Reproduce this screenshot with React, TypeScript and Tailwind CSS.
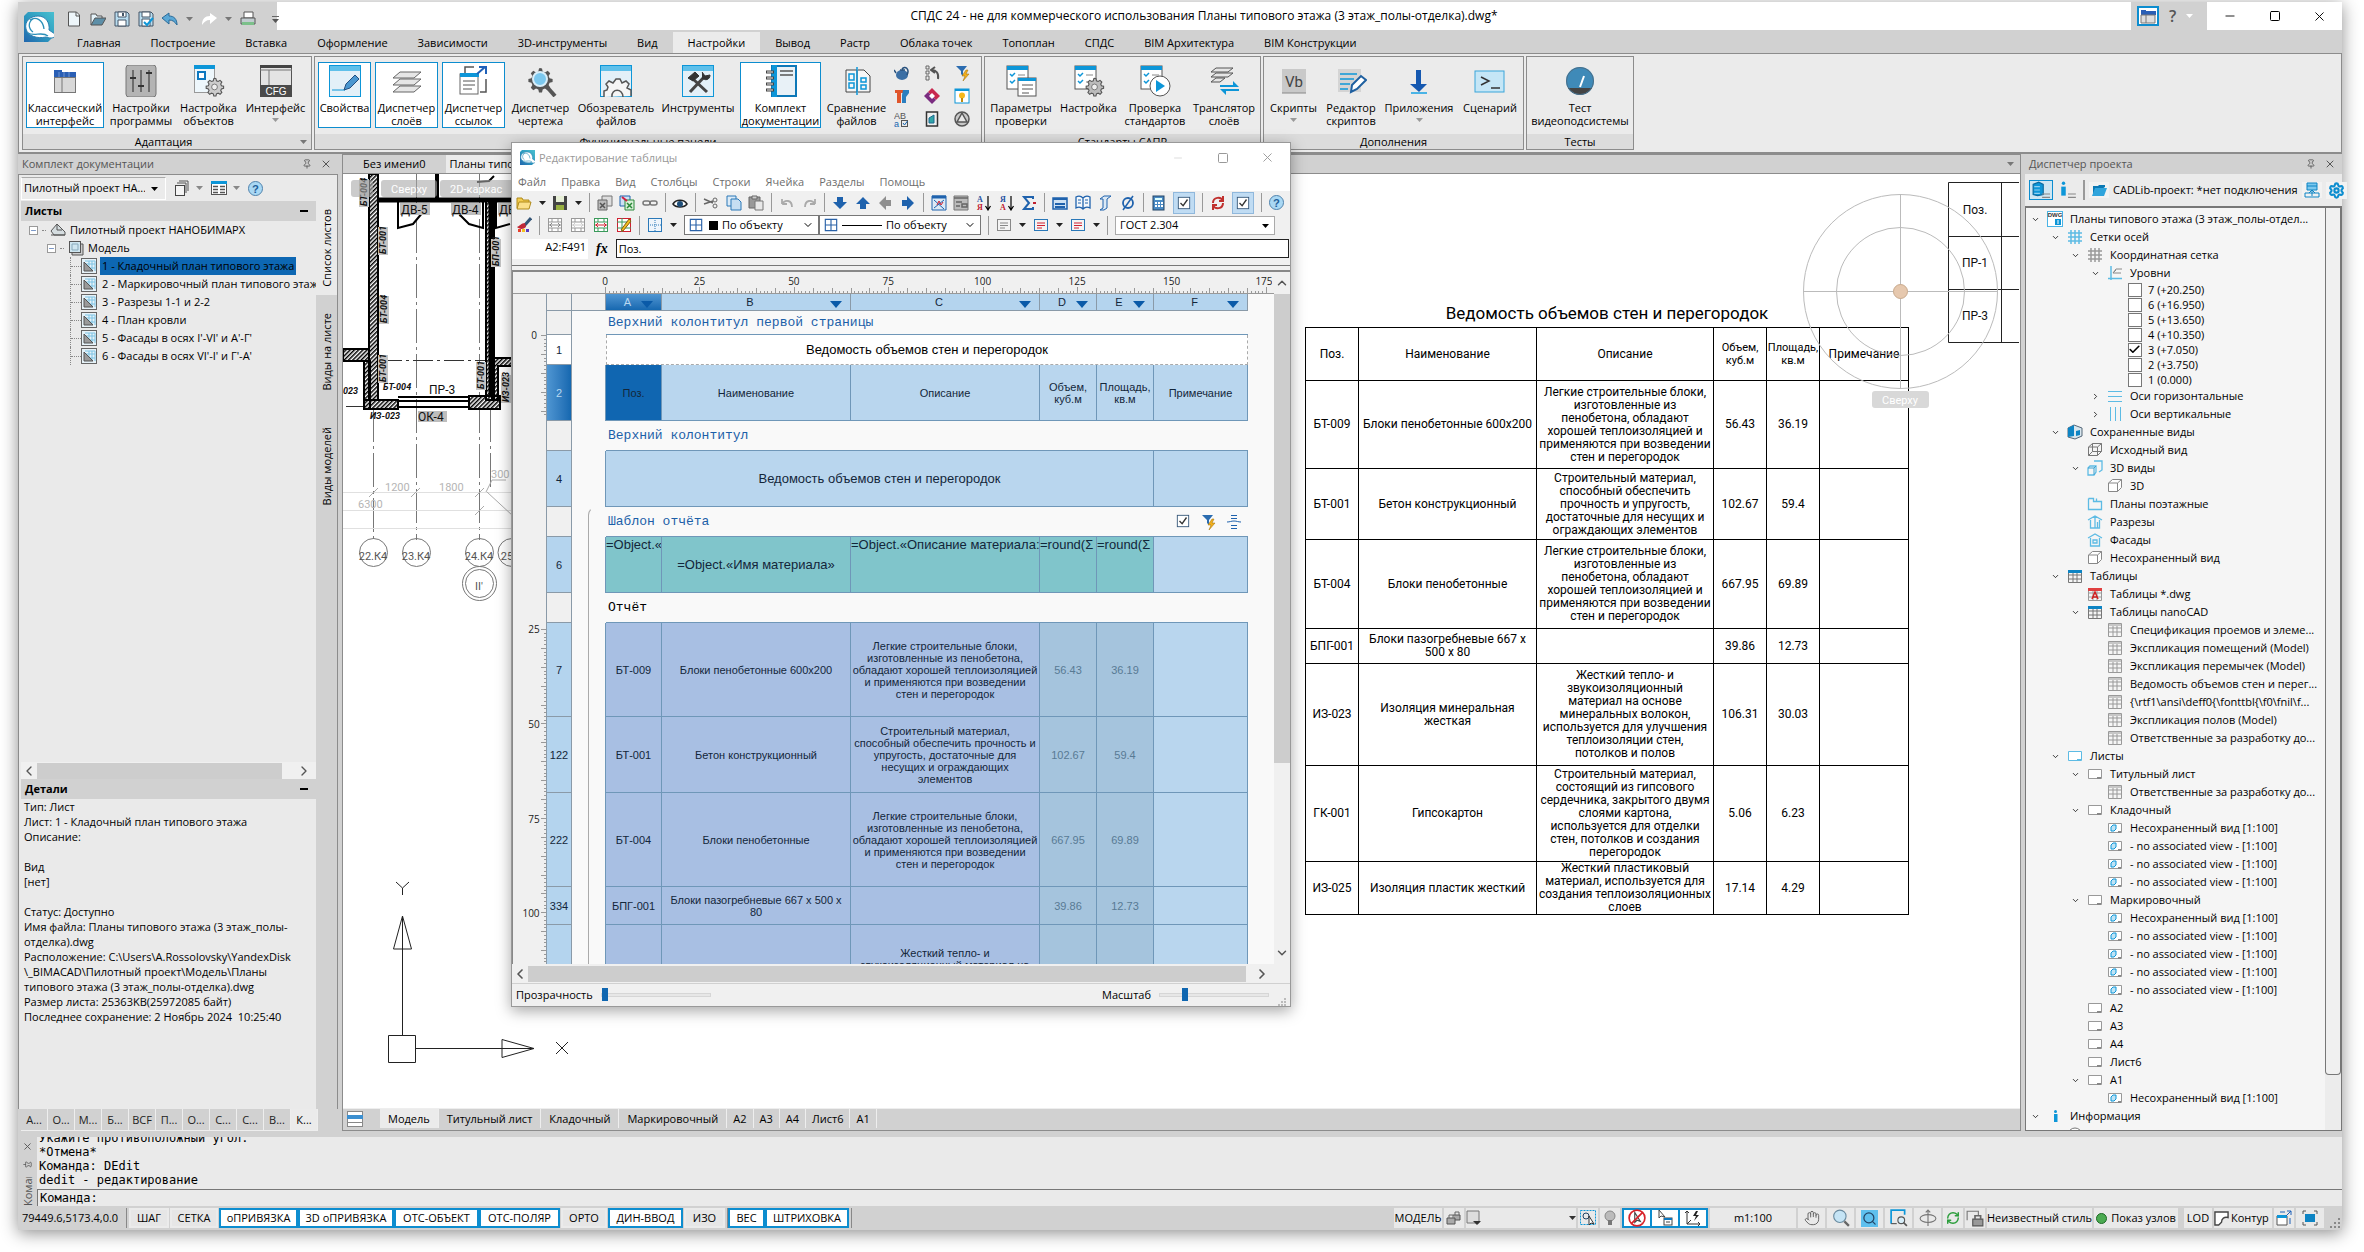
import React from 'react';
import type { ReactNode } from 'react';
import { Check, ChevronDown, ChevronLeft, ChevronRight, ChevronUp, Hand, Minus, Pin, RefreshCw, Search, Settings, Square, X } from 'lucide-react';

/* ---------- Icons ---------- */

interface IconProps {
  size?: number;
  box?: string;
  children: ReactNode;
}

const Icon: React.FC<IconProps> = ({ size = 16, box = '0 0 16 16', children }) => (
  <svg width={size} height={size} viewBox={box} fill="none" className="shrink-0" aria-hidden="true">
    {children}
  </svg>
);

const Big: React.FC<{ children: ReactNode }> = ({ children }) => (
  <Icon size={32} box="0 0 32 32">{children}</Icon>
);

const Caret: React.FC<{ color?: string }> = ({ color = '#555' }) => (
  <svg width="7" height="4" viewBox="0 0 7 4" className="shrink-0" aria-hidden="true">
    <path d="M0 0h7L3.500 4z" fill={color} />
  </svg>
);

const Logo: React.FC<{ size: number }> = ({ size }) => (
  <svg width={size} height={size} viewBox="0 0 30 30" className="shrink-0" aria-hidden="true">
    <defs>
      <linearGradient id={`logo${size}`} x1="1" y1="0" x2="0" y2="1">
        <stop offset="0" stopColor="#49bfd0" />
        <stop offset=".5" stopColor="#2d9bc0" />
        <stop offset="1" stopColor="#2166ad" />
      </linearGradient>
    </defs>
    <path d="M4 0h26v24l-6 6H0V4z" fill={`url(#logo${size})`} />
    <path d="M2 17C0 9 7 4 14 4c8 0 12 7 11 14l6 4c1 4-4 5-9 3C13 27 4 24 2 17z" fill="#fff" stroke="#2b7fb0" strokeWidth="1" />
    <path d="M6 8c6-4 13 0 14 9M9 20c-5-4-5-10 0-13M4 21c6 4 14-2 20 3" stroke="#2b8fb8" strokeWidth="1.300" fill="none" />
  </svg>
);

const gear = 'M16 6l2 .4.7 3 2.300 1 2.700-1.600 2.500 2.500-1.600 2.700 1 2.300 3 .7v3l-3 .7-1 2.300 1.600 2.700-2.500 2.500-2.700-1.600-2.300 1-.7 3h-3l-.7-3-2.300-1-2.700 1.600-2.500-2.500 1.600-2.700-1-2.300-3-.7v-3l3-.7 1-2.300-1.600-2.700 2.500-2.500 2.700 1.600 2.300-1 .7-3z';

const DocLines: React.FC = () => (
  <>
    <rect x="2" y="1" width="21" height="23" fill="#fff" stroke="#555" />
    <rect x="2" y="1" width="21" height="4" fill="#0d96d8" />
    <path d="M5 9l2 2 3-3M5 16l2 2 3-3" stroke="#0d96d8" strokeWidth="1.500" />
    <path d="M13 10h7M13 17h4" stroke="#888" />
  </>
);

const WindowFrame: React.FC = () => (
  <>
    <rect x=".5" y=".5" width="31" height="31" fill="#e3f0f8" stroke="#0d96d8" />
    <rect x="1" y="1" width="30" height="5" fill="#5fc0ea" />
  </>
);

const ribbonIcons: Record<string, ReactNode> = {
  classic: <Big><path d="M5 5h8v2h14v6H5z" fill="#2a5fb5" /><path d="M10 7v6M15 7v6M20 7v6" stroke="#6e95d0" /><rect x="5.500" y="12.500" width="21" height="15" fill="#d8d8d8" stroke="#777" /><path d="M13 12v16" stroke="#777" /></Big>,
  sliders: <Big><rect x="1" y="0" width="30" height="32" rx="3" fill="#b4b4b4" stroke="#777" /><path d="M8 5v22M16 5v22M24 5v22" stroke="#555" strokeWidth="1.500" /><path d="M5 13h6M13 21h6M21 8h6" stroke="#333" strokeWidth="2" /></Big>,
  object: <Big><rect x="1.500" y=".5" width="20" height="27" fill="#eef7fc" stroke="#999" /><path d="M1 0h21v4H1z" fill="#0d96d8" /><rect x="5" y="7" width="7" height="7" fill="#fff" stroke="#0d78c0" strokeWidth="2" /><g transform="translate(10 9) scale(.72)"><path d={gear} fill="#ccc" stroke="#555" strokeWidth="1.500" /><circle cx="16" cy="18" r="4" fill="#eee" stroke="#555" /></g></Big>,
  cfg: <Big><rect x=".5" y=".5" width="31" height="31" fill="#e4e4e4" stroke="#555" /><path d="M0 5h32M9 5v16" stroke="#777" /><path d="M0 0h32v3H0z" fill="#444" /><path d="M0 20h32v12H0z" fill="#4a4a4a" /><text x="16" y="30" textAnchor="middle" fontSize="10" fontFamily="Liberation Sans, sans-serif" fill="#fff">CFG</text></Big>,
  props: <Big><WindowFrame /><path d="M3 25h13" stroke="#0d96d8" /><path d="M15 25l2-6 9-9 4 4-9 9z" fill="#4a97d0" stroke="#234f80" /></Big>,
  layers: <Big><path d="M9 7h21l-7 6H2zM9 14h21l-7 6H2zM9 21h21l-7 6H2z" fill="#e6e6e6" stroke="#666" /></Big>,
  links: <Big><path d="M7 9V2h9M22 27h6V14" stroke="#555" strokeWidth="1.500" /><rect x="2" y="9" width="18" height="20" fill="#fff" stroke="#666" /><path d="M2 8h19v4H2z" fill="#0d96d8" /><path d="M5 16h12M5 20h12M5 24h9" stroke="#555" /><path d="M19 9l8-7M21 2h7v7" stroke="#1f60b8" strokeWidth="2" /></Big>,
  manager: <Big><path d="M22 22l8 9" stroke="#555" strokeWidth="4" /><g transform="translate(-1 -3)"><path d={gear} fill="#555" /></g><circle cx="15" cy="14" r="7" fill="#7cc8ee" stroke="#d8eef9" strokeWidth="2" /></Big>,
  files: <Big><WindowFrame /><path d="M4 32v-6l3-1 1-3-2-3 3-3 4 2 3-4h4l2 4 4-2 3 3-2 4 4 2v6" fill="#f5f5f5" stroke="#555" strokeWidth="1.500" /><path d="M12 32c-1-9 11-9 11 0" stroke="#555" strokeWidth="1.500" /></Big>,
  tools: <Big><WindowFrame /><path d="M8 27L23 11M11 14l14 13" stroke="#444" strokeWidth="3" /><path d="M6 13l7-6 4 4-6 5zM20 7l3 4 5-1c0 5-5 6-8 3" fill="#333" stroke="#333" /></Big>,
  book: <Big><rect x="7" y="1" width="24" height="30" fill="#e8f1f7" stroke="#0d78b8" strokeWidth="2" /><path d="M7 0h5v32H7z" fill="#0d96d8" /><path d="M15 6h13M15 10h13" stroke="#555" strokeWidth="1.500" /><path d="M1 7h8M1 13h8M1 19h8M1 25h8" stroke="#444" strokeWidth="3" /><path d="M2 7h6M2 13h6M2 19h6M2 25h6" stroke="#eee" /></Big>,
  compare: <Big><path d="M5 5h11v22H5zM17 5h6l6 6v16H17" fill="#f6f6f6" stroke="#444" /><path d="M16 2v28" stroke="#0d96d8" strokeWidth="1.500" /><path d="M8 9h5v6H8zM8 18h5v5H8zM20 13h5v4h-5zM20 20h5v4h-5z" stroke="#0d96d8" strokeWidth="1.500" /></Big>,
  params: <Big><DocLines /><rect x="13" y="13" width="18" height="18" fill="#fff" stroke="#555" /><path d="M13 13h18v3H13z" fill="#0d96d8" /><path d="M17 20h11M17 24h11M17 28h7" stroke="#555" /></Big>,
  setup: <Big><DocLines /><g transform="translate(10 9) scale(.72)"><path d={gear} fill="#bbb" stroke="#555" strokeWidth="1.500" /><circle cx="16" cy="18" r="4" fill="#eee" stroke="#555" /></g></Big>,
  check: <Big><DocLines /><circle cx="21" cy="21" r="10" fill="#fff" stroke="#555" /><path d="M17 15l9 6-9 6z" fill="#0d96d8" /></Big>,
  translate: <Big><path d="M8 3h17l-5 4H3zM8 8h17l-5 4H3zM8 13h9l-5 4H3z" fill="#e6e6e6" stroke="#555" /><path d="M12 20h13v-4l6 6H12zM31 26H18v4l-6-6h19z" fill="#0d96d8" /></Big>,
  vb: <Big><rect x="4" y="4" width="24" height="24" fill="#c9c9c9" /><path d="M4 28h24" stroke="#888" /><text x="16" y="22" textAnchor="middle" fontSize="15" fontFamily="Roboto, sans-serif" fill="#444">Vb</text></Big>,
  editor: <Big><rect x="3" y="4" width="23" height="23" fill="#d4d4d4" /><path d="M5 9h17M5 14h14M5 19h10M5 24h8" stroke="#0d96d8" strokeWidth="1.500" /><path d="M16 27l1-7 9-9 5 4-9 9z" fill="#fff" stroke="#1f60a0" strokeWidth="2" /></Big>,
  apps: <Big><path d="M13 5h5v14h6l-8 8-9-8h6z" fill="#1558b0" /><path d="M8 28h16" stroke="#4ab4e6" strokeWidth="2" /></Big>,
  script: <Big><rect x="1" y="6" width="29" height="21" fill="#c5e6f6" stroke="#3aa6da" /><path d="M7 12l8 4-8 4M17 23h9" stroke="#333" strokeWidth="1.500" /></Big>,
  video: <Big><circle cx="16" cy="16" r="14" fill="#3f8ab8" /><path d="M4 23a14 14 0 0 0 24 0z" fill="#444" /><path d="M16 22l4-11" stroke="#fff" strokeWidth="2" /><circle cx="16" cy="16" r="13.500" stroke="#4c6f88" /></Big>,
};

const smallRibbon: ReactNode[] = [
  <Icon><ellipse cx="8" cy="10" rx="6" ry="5" fill="#3b6fa5" /><path d="M8 4c3-4 8 0 5 6M2 8L0 5M6 5h5" stroke="#27507c" strokeWidth="1.500" /></Icon>,
  <Icon><path d="M2 1h3v3H2zM2 6h3v3H2zM2 11h3v4H2z" stroke="#666" /><path d="M14 14c1-6-2-9-6-9M11 2L7 5l4 3" stroke="#555" strokeWidth="2" /></Icon>,
  <Icon><path d="M2 1h11L9 6v5L7 9V6z" fill="#2b6cb0" /><path d="M12 5l-4 6h3l-2 5 6-7h-3l2-4z" fill="#f2b01e" stroke="#9a6a00" strokeWidth=".5" /></Icon>,
  <Icon><path d="M1 2h10v3H7v10H3V5H1z" fill="#e0552b" /><path d="M9 2h6v3l-3 4v6H8V7z" fill="#2b7fc0" /></Icon>,
  <Icon><path d="M8 0l4 4-4 4-4-4zM12 4l4 4-4 4-4-4z" fill="#c8284f" /><path d="M4 4l4 4-4 4-4-4zM8 8l4 4-4 4-4-4z" fill="#7a2c80" /><path d="M8 5l3 3-3 3-3-3z" fill="#fff" /></Icon>,
  <Icon><rect x="1" y="1" width="14" height="14" fill="#fff" stroke="#0d96d8" /><path d="M1 1h14v2H1z" fill="#0d96d8" /><circle cx="8" cy="7.500" r="3" fill="#f6b81c" /><path d="M7 10h2v4H7z" fill="#c08a10" /></Icon>,
  <Icon><text x="0" y="8" fontSize="9" fontFamily="Liberation Sans, sans-serif" fill="#555">AB</text><text x="0" y="16" fontSize="9" fontFamily="Liberation Sans, sans-serif" fill="#1565b0">a</text><rect x="7.500" y="9.500" width="6" height="6" stroke="#555" /><path d="M9 12l1.500 2 3-4" stroke="#1565b0" /></Icon>,
  <Icon><rect x="2.500" y="1" width="11" height="14" fill="#f0f0f0" stroke="#333" strokeWidth="1.500" /><path d="M5 7l5-3v8H5z" fill="#31a5a8" stroke="#1d6a90" /></Icon>,
  <Icon><circle cx="8" cy="8" r="7" stroke="#555" strokeWidth="1.500" fill="#c8c8c8" /><path d="M8 2l5 9H3z" stroke="#555" strokeWidth="1.500" fill="#e8e8e8" /></Icon>,
];

const SheetIcon: React.FC = () => (
  <Icon><rect x=".5" y=".5" width="15" height="15" fill="#e6f2f8" stroke="#666" /><path d="M4 3h10v10M4 6h10M8 3v10M11 3v10M4 10h10" stroke="#7cc3e4" /><path d="M3 4l9 9H3z" fill="#9a9a9a" stroke="#555" /></Icon>
);

const HelpIcon: React.FC = () => (
  <Icon size={15}><circle cx="8" cy="8" r="7.500" fill="#a9d8f4" stroke="#4a7da8" /><text x="8" y="12.500" textAnchor="middle" fontSize="12" fontWeight="bold" fontFamily="Liberation Sans, sans-serif" fill="#1f5f9a">?</text></Icon>
);

/* ---------- Title bar, tabs and ribbon ---------- */

const tabs = ['Главная', 'Построение', 'Вставка', 'Оформление', 'Зависимости', '3D-инструменты', 'Вид', 'Настройки', 'Вывод', 'Растр', 'Облака точек', 'Топоплан', 'СПДС', 'BIM Архитектура', 'BIM Конструкции'];

const quickIcons: ReactNode[] = [
  <Icon><path d="M2.500 1h8l3 3v11h-11z" fill="#eef6fa" stroke="#555" /><path d="M10 1v4h4" stroke="#555" /></Icon>,
  <Icon><path d="M1 14V3h5l1 2h5v3" fill="#e5f3fa" stroke="#555" /><path d="M1 14l4-7h11l-4 7z" fill="#5d8fa8" stroke="#555" /></Icon>,
  <Icon><path d="M1 1h12l2 2v12H1z" fill="#b9ddf0" stroke="#456" /><path d="M4 1h8v5H4zM4 9h8v6H4z" fill="#fff" stroke="#456" /><path d="M9 2v3" stroke="#456" strokeWidth="2" /></Icon>,
  <Icon><path d="M1 1h12l2 2v12H1z" fill="#b9ddf0" stroke="#456" /><path d="M4 1h8v5H4zM4 8h8v7H4z" fill="#fff" stroke="#456" /><path d="M6 11l3 3 6-7" stroke="#0d96d8" strokeWidth="2" /></Icon>,
  <Icon><path d="M7 2v3c5 0 8 3 8 9-2-3-4-5-8-5v4L0 7z" fill="#5ba8d6" stroke="#2a6a98" /></Icon>,
  <Caret color="#777" />,
  <Icon><path d="M9 2v3c-5 0-8 3-8 9 2-3 4-5 8-5v4l7-6z" fill="#fff" /></Icon>,
  <Caret color="#777" />,
  <Icon><path d="M4 1h9v6H4z" fill="#fff" stroke="#555" /><path d="M1 7h14v6H1z" fill="#c2ccd0" stroke="#555" /><path d="M2 11h12v3H2z" fill="#7cc08a" /></Icon>,
];

const Header: React.FC = () => (
  <header className="grid grid-cols-[auto_1fr] bg-[#d1d1d1]">
    <div className="row-span-2 w-11 pl-1.5 pt-2.5">
      <Logo size={30} />
    </div>
    <div className="flex h-7 items-stretch bg-white">
      <div className="flex w-[215px] items-center gap-2 bg-[#d1d1d1] pl-1 pt-1.5">
        {quickIcons.map((icon, i) => (
          <button key={i} type="button" aria-label={`Быстрый доступ ${i + 1}`}>{icon}</button>
        ))}
        <button type="button" aria-label="Настроить панель" className="ml-2 border-t border-[#666] pt-0.5"><Caret /></button>
      </div>
      <h1 className="flex-1 pt-1 text-center text-xs leading-5">СПДС 24 - не для коммерческого использования Планы типового этажа (3 этаж_полы-отделка).dwg*</h1>
      <div className="flex w-[76px] items-center gap-2.5 bg-[#d1d1d1] pl-1.5">
        <button type="button" aria-label="Вид ленты" className="border-2 border-[#0d8dcf] bg-white px-px">
          <Icon><path d="M1 2h5v1h10v4H1z" fill="#2a5fb5" /><path d="M1 7h14v8H1zM6 7v8" fill="#ddd" stroke="#777" /></Icon>
        </button>
        <button type="button" aria-label="Справка" className="text-base font-semibold text-[#555]">?</button>
        <Caret color="#fff" />
      </div>
      <div className="flex">
        <button type="button" aria-label="Свернуть" className="flex w-[45px] items-center justify-center"><Minus size={14} strokeWidth={1.5} /></button>
        <button type="button" aria-label="Развернуть" className="flex w-[45px] items-center justify-center"><Square size={12} strokeWidth={2} /></button>
        <button type="button" aria-label="Закрыть" className="flex w-[45px] items-center justify-center"><X size={15} strokeWidth={1.5} /></button>
      </div>
    </div>
    <nav className="flex h-[23px] items-end">
      {tabs.map((tab) => (
        <button key={tab} type="button" className={`h-[21px] px-[15px] leading-5 ${tab === 'Настройки' ? 'bg-[#ebebeb]' : ''}`}>{tab}</button>
      ))}
    </nav>
  </header>
);

interface RibbonItem {
  icon: string;
  label: string;
  width: string;
  active?: boolean;
  menu?: boolean;
}

const ribbonGroups: { title: string; items: RibbonItem[]; grid?: boolean; menu?: boolean }[] = [
  {
    title: 'Адаптация',
    menu: true,
    items: [
      { icon: 'classic', label: 'Классический интерфейс', width: 'w-[78px]', active: true },
      { icon: 'sliders', label: 'Настройки программы', width: 'w-[66px]' },
      { icon: 'object', label: 'Настройка объектов', width: 'w-[61px]' },
      { icon: 'cfg', label: 'Интерфейс', width: 'w-[65px]', menu: true },
    ],
  },
  {
    title: 'Функциональные панели',
    grid: true,
    items: [
      { icon: 'props', label: 'Свойства', width: 'w-[53px]', active: true },
      { icon: 'layers', label: 'Диспетчер слоёв', width: 'w-[63px]', active: true },
      { icon: 'links', label: 'Диспетчер ссылок', width: 'w-[63px]', active: true },
      { icon: 'manager', label: 'Диспетчер чертежа', width: 'w-[63px]' },
      { icon: 'files', label: 'Обозреватель файлов', width: 'w-[80px]' },
      { icon: 'tools', label: 'Инструменты', width: 'w-[76px]' },
      { icon: 'book', label: 'Комплект документации', width: 'w-[81px]', active: true },
      { icon: 'compare', label: 'Сравнение файлов', width: 'w-[63px]' },
    ],
  },
  {
    title: 'Стандарты САПР',
    items: [
      { icon: 'params', label: 'Параметры проверки', width: 'w-[66px]' },
      { icon: 'setup', label: 'Настройка', width: 'w-[61px]' },
      { icon: 'check', label: 'Проверка стандартов', width: 'w-[64px]' },
      { icon: 'translate', label: 'Транслятор слоёв', width: 'w-[66px]' },
    ],
  },
  {
    title: 'Дополнения',
    items: [
      { icon: 'vb', label: 'Скрипты', width: 'w-[53px]', menu: true },
      { icon: 'editor', label: 'Редактор скриптов', width: 'w-[54px]' },
      { icon: 'apps', label: 'Приложения', width: 'w-[74px]', menu: true },
      { icon: 'script', label: 'Сценарий', width: 'w-[60px]' },
    ],
  },
  { title: 'Тесты', items: [{ icon: 'video', label: 'Тест видеоподсистемы', width: 'w-[100px]' }] },
];

const Ribbon: React.FC = () => (
  <div className="flex gap-0.5 border border-[#8c8c8c] bg-[#ebebeb] px-[3px] py-0.5">
    {ribbonGroups.map((group) => (
      <section key={group.title} className="border border-[#8c8c8c]">
        <div className="flex h-[77px] gap-1 px-[3px] pt-[5px]">
          {group.items.map((item) => (
            <button
              key={item.label}
              type="button"
              className={`flex h-[66px] shrink-0 flex-col items-center border pt-0.5 leading-[13px] ${item.width} ${item.active ? 'border-[#0d8dcf] bg-white' : 'border-transparent'}`}
            >
              {ribbonIcons[item.icon]}
              <span className="mt-1 text-center">{item.label}</span>
              {item.menu && <span className="mt-1"><Caret color="#999" /></span>}
            </button>
          ))}
          {group.grid && (
            <div className="grid grid-cols-3 place-items-center gap-x-3.5 pb-1 pl-0.5 pr-2">
              {smallRibbon.map((icon, i) => (
                <button key={i} type="button" aria-label={`Панель ${i + 1}`}>{icon}</button>
              ))}
            </div>
          )}
        </div>
        <div className="flex h-[15px] items-center bg-[#dcdcdc] px-1 leading-[14px]">
          <span className="flex-1 text-center">{group.title}</span>
          {group.menu && <Caret color="#777" />}
        </div>
      </section>
    ))}
  </div>
);

/* ---------- Left panel ---------- */

const sheets = [
  '1 - Кладочный план типового этажа',
  '2 - Маркировочный план типового этажа',
  '3 - Разрезы 1-1 и 2-2',
  '4 - План кровли',
  "5 - Фасады в осях I'-VI' и А'-Г'",
  "6 - Фасады в осях VI'-I' и Г'-А'",
];

const details = `Тип: Лист
Лист: 1 - Кладочный план типового этажа
Описание:

Вид
[нет]

Статус: Доступно
Имя файла: Планы типового этажа (3 этаж_полы-
отделка).dwg
Расположение: C:\\Users\\A.Rossolovsky\\YandexDisk
\\_BIMACAD\\Пилотный проект\\Модель\\Планы
типового этажа (3 этаж_полы-отделка).dwg
Размер листа: 25363KB(25972085 байт)
Последнее сохранение: 2 Ноябрь 2024  10:25:40`;

const leftTabs = ['А...', 'О...', 'М...', 'Б...', 'BCF', 'П...', 'О...', 'С...', 'С...', 'В...', 'К...'];

const PanelTitle: React.FC<{ children: ReactNode }> = ({ children }) => (
  <div className="flex h-5 shrink-0 items-center gap-2 pl-1 pr-1.5 text-[#555]">
    <h2 className="flex-1">{children}</h2>
    <button type="button" aria-label="Закрепить"><Pin size={10} /></button>
    <button type="button" aria-label="Закрыть панель"><X size={12} /></button>
  </div>
);

const PanelHeading: React.FC<{ children: ReactNode }> = ({ children }) => (
  <div className="flex h-5 shrink-0 items-center justify-between bg-[#d1d1d1] pl-1 pr-2 font-bold">
    <h3>{children}</h3>
    <button type="button" aria-label="Свернуть раздел" className="h-0.5 w-2 bg-black" />
  </div>
);

const Expander: React.FC = () => (
  <span className="flex h-[9px] w-[9px] shrink-0 items-center justify-center border border-[#999] bg-white text-[#1f4fa0]"><Minus size={7} /></span>
);

const LeftPanel: React.FC = () => (
  <aside className="flex w-80 shrink-0 flex-col">
    <PanelTitle>Комплект документации</PanelTitle>
    <div className="flex min-h-0 flex-1 flex-col border border-b-0 border-[#8c8c8c] bg-[#eaeaea] pl-0.5">
      <div className="flex h-[26px] shrink-0 items-center gap-2">
        <div className="relative w-[145px]">
          <select aria-label="Проект" className="h-[23px] w-full appearance-none border border-white border-t-[#aaa] bg-[#ebebeb] pl-0.5 pr-5">
            <option>Пилотный проект НА...</option>
          </select>
          <span className="pointer-events-none absolute right-2 top-2.5"><Caret color="#000" /></span>
        </div>
        <button type="button" aria-label="Листы" className="flex items-center gap-1.5">
          <Icon><path d="M5 1h9v10" stroke="#555" /><path d="M3 3h9v10" stroke="#555" /><rect x="1.500" y="5.500" width="9" height="10" fill="#f4f4f4" stroke="#444" /></Icon>
          <Caret color="#888" />
        </button>
        <button type="button" aria-label="Таблица" className="flex items-center gap-1.5">
          <Icon><rect x=".5" y="1.500" width="15" height="13" fill="#fff" stroke="#555" /><path d="M0 1h16v3H0z" fill="#0d96d8" /><path d="M2 6.500h5M2 9.500h5M2 12.500h5M9 6.500h5M9 9.500h5M9 12.500h5" stroke="#555" strokeWidth="1.500" /></Icon>
          <Caret color="#888" />
        </button>
        <button type="button" aria-label="Помощь"><HelpIcon /></button>
      </div>
      <div className="flex min-h-0 flex-1">
        <div className="flex min-w-0 flex-1 flex-col">
          <PanelHeading>Листы</PanelHeading>
          <ul className="flex-1 overflow-hidden whitespace-nowrap leading-[18px]">
            <li className="flex items-center gap-1 pl-2">
              <Expander />
              <span className="w-1 border-t border-dotted border-[#888]" />
              <Icon><path d="M1 9l6-7 8 8v3H4z" fill="#d5dde0" stroke="#555" /><path d="M7 2v6h5M1 13h14" stroke="#555" /></Icon>
              Пилотный проект НАНОБИМАРХ
            </li>
            <li className="flex items-center gap-1 pl-[26px]">
              <Expander />
              <span className="w-1 border-t border-dotted border-[#888]" />
              <Icon><path d="M4 4h11v11H4z" fill="#ccc" stroke="#555" /><rect x="1.500" y="1.500" width="11" height="11" fill="#cfe6f0" stroke="#555" /><path d="M4 4h6v6H4z" stroke="#8ab" /></Icon>
              Модель
            </li>
            <li>
              <ul className="ml-[49px]">
                {sheets.map((sheet, i) => (
                  <li key={sheet} className="flex items-center border-l border-dotted border-[#888]">
                    <span className="w-2.5 shrink-0 border-t border-dotted border-[#888]" />
                    <SheetIcon />
                    <span className={`ml-[3px] shrink-0 px-0.5 ${i === 0 ? 'bg-[#0d67b3]' : ''}`}>{sheet}</span>
                  </li>
                ))}
              </ul>
            </li>
          </ul>
          <div className="flex h-[17px] shrink-0 items-center bg-[#f0f0f0] text-[#555]">
            <ChevronLeft size={16} />
            <div className="mr-[34px] h-4 flex-1 bg-[#cdcdcd]" />
            <ChevronRight size={16} className="-ml-5 mr-1" />
          </div>
          <PanelHeading>Детали</PanelHeading>
          <p className="h-[310px] whitespace-pre pl-[3px] leading-[15px]">{details}</p>
        </div>
        <div className="flex w-[21px] flex-col bg-[#d1d1d1]">
          {['Список листов', 'Виды на листе', 'Виды моделей'].map((tab, i) => (
            <button
              key={tab}
              type="button"
              className={`flex items-center justify-center ${i === 0 ? 'h-[94px] bg-[#eaeaea]' : 'h-[114px]'}`}
            >
              <span className="rotate-180 whitespace-nowrap [writing-mode:vertical-rl]">{tab}</span>
            </button>
          ))}
        </div>
      </div>
    </div>
    <div className="flex h-[22px] shrink-0 pl-[3px]">
      {leftTabs.map((tab, i) => (
        <button key={i} type="button" className={`w-[27px] whitespace-nowrap border-b border-r border-[#eee] ${i === 10 ? 'bg-[#ebebeb] text-black' : 'text-[#222]'}`}>{tab}</button>
      ))}
    </div>
  </aside>
);

/* ---------- Drawing ---------- */

interface Material {
  code: string;
  name: string;
  text: string;
  volume: string;
  area: string;
  height: string;
}

const schedule: Material[] = [
  { code: 'БТ-009', name: 'Блоки пенобетонные 600х200', text: 'Легкие строительные блоки,\nизготовленные из\nпенобетона, обладают\nхорошей теплоизоляцией и\nприменяются при возведении\nстен и перегородок', volume: '56.43', area: '36.19', height: 'h-[88px]' },
  { code: 'БТ-001', name: 'Бетон конструкционный', text: 'Строительный материал,\nспособный обеспечить\nпрочность и упругость,\nдостаточные для несущих и\nограждающих элементов', volume: '102.67', area: '59.4', height: 'h-[71px]' },
  { code: 'БТ-004', name: 'Блоки пенобетонные', text: 'Легкие строительные блоки,\nизготовленные из\nпенобетона, обладают\nхорошей теплоизоляцией и\nприменяются при возведении\nстен и перегородок', volume: '667.95', area: '69.89', height: 'h-[89px]' },
  { code: 'БПГ-001', name: 'Блоки пазогребневые 667 х\n500 х 80', text: '', volume: '39.86', area: '12.73', height: 'h-[35px]' },
  { code: 'ИЗ-023', name: 'Изоляция минеральная\nжесткая', text: 'Жесткий тепло- и\nзвукоизоляционный\nматериал на основе\nминеральных волокон,\nиспользуется для улучшения\nтеплоизоляции стен,\nпотолков и полов', volume: '106.31', area: '30.03', height: 'h-[102px]' },
  { code: 'ГК-001', name: 'Гипсокартон', text: 'Строительный материал,\nсостоящий из гипсового\nсердечника, закрытого двумя\nслоями картона,\nиспользуется для отделки\nстен, потолков и создания\nперегородок', volume: '5.06', area: '6.23', height: 'h-[96px]' },
  { code: 'ИЗ-025', name: 'Изоляция пластик жесткий', text: 'Жесткий пластиковый\nматериал, используется для\nсоздания теплоизоляционных\nслоев', volume: '17.14', area: '4.29', height: 'h-[53px]' },
];

const ScheduleTable: React.FC = () => (
  <table className="absolute left-[962px] top-[129px] w-[603px] table-fixed border-collapse text-center font-['Roboto','Liberation_Sans',sans-serif] text-xs leading-[13px]">
    <caption className="pb-1 text-[17px] leading-5">Ведомость объемов стен и перегородок</caption>
    <colgroup>
      <col className="w-[53px]" />
      <col className="w-[178px]" />
      <col className="w-[177px]" />
      <col className="w-[53px]" />
      <col className="w-[53px]" />
      <col className="w-[89px]" />
    </colgroup>
    <thead>
      <tr className="h-[53px]">
        {['Поз.', 'Наименование', 'Описание', 'Объем,\nкуб.м', 'Площадь,\nкв.м', 'Примечание'].map((h) => (
          <th key={h} className={`whitespace-pre border border-black p-0 font-normal ${h.includes('\n') ? 'text-[11px]' : ''}`}>{h}</th>
        ))}
      </tr>
    </thead>
    <tbody>
      {schedule.map((row) => (
        <tr key={row.code} className={row.height}>
          {[row.code, row.name, row.text, row.volume, row.area, ''].map((cell, i) => (
            <td key={i} className="whitespace-pre border border-black p-0">{cell}</td>
          ))}
        </tr>
      ))}
    </tbody>
  </table>
);

const wallTags: [number, number, string][] = [
  [368, 206, 'БТ-004'],
  [387, 254, 'БТ-001'],
  [388, 323, 'БТ-004'],
  [387, 382, 'БТ-001'],
  [500, 266, 'БП-001'],
  [485, 389, 'БТ-001'],
  [510, 402, 'ИЗ-023'],
];

const FloorPlan: React.FC = () => (
  <svg width="1676" height="933" viewBox="344 174 1676 933" fill="none" className="absolute left-0 top-0 font-['Roboto',sans-serif]">
    <defs>
      <pattern id="hatch" width="3" height="3" patternUnits="userSpaceOnUse" patternTransform="rotate(45)">
        <rect width="3" height="3" fill="#fff" />
        <path d="M0 0v3" stroke="#000" strokeWidth="3" />
      </pattern>
    </defs>
    {/* оси */}
    <path d="M374.500 408V540M417.500 174V540M480.500 174V540M491.500 408V490" stroke="#777" strokeDasharray="34 4 3 4" />
    <path d="M383 360.500H490M347 406.500h18" stroke="#333" strokeDasharray="20 4 3 4" />
    <path d="M344 492.500h170M344 510.500h170M344 528.500h170" stroke="#e0e0e0" />
    <path d="M370 497l9-9M412 497l9-9M476 497l9-9M476 515l9-9M488 492l26 24M487 492l6-12h14" stroke="#aaa" />
    {/* стены */}
    <path d="M370 174h9v226h-9zM344 349h26v12h-26zM365 361h6v48h-6zM365 400h34v9h-34zM470 396h31v13h-31zM487 200h8v200h-8zM493 358h20v8h-14v34h-6z" fill="url(#hatch)" stroke="#000" strokeWidth="2" />
    <path d="M379 200h135M492 200v196" stroke="#000" strokeWidth="5" />
    <path d="M438 174v26" stroke="#000" strokeWidth="4" />
    <path d="M399 397h71M399 401h71M399 407h71" stroke="#000" strokeWidth="2" />
    <path d="M399 202v26l15-4 10-12M484 202v26l-14-4-10-10M497 202v26l14-4M478 182l12-1 5-5" stroke="#000" strokeWidth="2" />
    <g fill="#bdbdbd">
      <rect x="401" y="203" width="30" height="12" />
      <rect x="452" y="203" width="30" height="12" />
      <rect x="499" y="203" width="15" height="12" />
      <rect x="419" y="411" width="29" height="11" />
    </g>
    <g fill="#111" fontSize="12">
      <text x="402" y="214">ДВ-5</text>
      <text x="453" y="214">ДВ-4</text>
      <text x="500" y="214">ДВ</text>
      <text x="430" y="394">ПР-3</text>
      <text x="419" y="421">ОК-4</text>
    </g>
    <g fill="#111" fontSize="9" fontStyle="italic" fontWeight="bold">
      {wallTags.map(([x, y, tag]) => (
        <g key={`${x}-${y}`} transform={`translate(${x} ${y}) rotate(-90)`}>
          <rect x="-1" y="-8" width="28" height="10" fill="#c4c4c4" />
          <text>{tag}</text>
        </g>
      ))}
      <text x="384" y="390">БТ-004</text>
      <text x="371" y="419">ИЗ-023</text>
      <text x="344" y="394">023</text>
    </g>
    <g fill="#b5b5b5" fontSize="11">
      <text x="386" y="491">1200</text>
      <text x="440" y="491">1800</text>
      <text x="359" y="508">6300</text>
      <text x="492" y="478">300</text>
    </g>
    <g stroke="#777">
      <circle cx="374.500" cy="552.500" r="14" />
      <circle cx="417.500" cy="552.500" r="14" />
      <circle cx="480.500" cy="552.500" r="14" />
      <circle cx="513" cy="552.500" r="14" />
      <circle cx="480.500" cy="583.500" r="17" />
      <circle cx="480.500" cy="583.500" r="14" />
    </g>
    <g fill="#555" fontSize="11" textAnchor="middle">
      <text x="374" y="560">22.К4</text>
      <text x="417" y="560">23.К4</text>
      <text x="480" y="560">24.К4</text>
      <text x="508" y="560">25</text>
      <text x="480" y="590">II'</text>
    </g>
    {/* знак ПСК */}
    <path d="M389.500 1035.500h27v27h-27zM403.500 1035V916l-9 33h18l-9-33M417 1048.500h118l-32-9v18l32-9" stroke="#222" />
    <path d="M397 882l6.500 6 6.500-6M403.500 888v7M557 1042l12 12M569 1042l-12 12" stroke="#222" />
    {/* фрагмент ведомости перемычек */}
    <path d="M2020 182.500h-70.500v160H2020M1949 236.500h71M1949 289.500h71M2002.500 182v160" stroke="#222" />
    <g fill="#111" fontSize="12" textAnchor="middle">
      <text x="1976" y="214">Поз.</text>
      <text x="1976" y="267">ПР-1</text>
      <text x="1976" y="320">ПР-3</text>
    </g>
    {/* компас */}
    <g stroke="#bbb">
      <circle cx="1901.500" cy="291.500" r="97" />
      <circle cx="1901.500" cy="291.500" r="64" />
      <path d="M1804 291.500h195M1901.500 194v195" />
      <circle cx="1901.500" cy="291.500" r="7" fill="#e6c8ae" stroke="#c9a98c" />
    </g>
    <rect x="1873" y="391" width="57" height="17" rx="3" fill="#d8d8d8" />
    <text x="1901" y="404" textAnchor="middle" fontSize="11" fill="#fff">Сверху</text>
    <g fill="#a8a8a8" fillOpacity=".6">
      <rect x="352" y="180" width="22" height="17" rx="3" />
      <rect x="382" y="180" width="56" height="17" rx="3" />
      <rect x="441" y="180" width="80" height="17" rx="3" />
    </g>
    <g fill="#fff" fontSize="11">
      <text x="392" y="193">Сверху</text>
      <text x="451" y="193">2D-каркас</text>
    </g>
  </svg>
);

const Drawing: React.FC = () => (
  <main className="flex min-w-0 flex-1 flex-col border border-[#8c8c8c]">
    <div className="flex h-[19px] shrink-0 items-center border-b border-[#8c8c8c]">
      <button type="button" className="h-full px-5 leading-4">Без имени0</button>
      <button type="button" className="h-full flex-1 bg-[#ebebeb] pl-1 text-left leading-4">Планы типового этажа</button>
      <span className="flex h-full flex-[9] items-center justify-end pr-1.5"><Caret color="#777" /></span>
    </div>
    <div className="relative min-h-0 flex-1 overflow-hidden bg-white">
      <ScheduleTable />
      <FloorPlan />
    </div>
    <div className="flex h-[22px] shrink-0 items-stretch border-t border-[#eee] pb-0.5">
      <button type="button" aria-label="Список листов" className="flex w-[37px] items-center pl-1">
        <Icon><rect x=".5" y=".5" width="15" height="15" fill="#fff" stroke="#888" /><path d="M0 4h16v4H0z" fill="#3b8fd0" /><path d="M0 11.500h16" stroke="#888" /></Icon>
      </button>
      {['Модель', 'Титульный лист', 'Кладочный', 'Маркировочный', 'А2', 'А3', 'А4', 'Лист6', 'А1'].map((tab, i) => (
        <button key={tab} type="button" className={`border-r border-[#eee] ${i === 0 ? 'bg-[#ebebeb]' : ''} ${i < 4 ? 'px-2' : 'px-1.5'}`}>{tab}</button>
      ))}
    </div>
  </main>
);

/* ---------- Right panel ---------- */

interface TreeNode {
  depth: number;
  label: string;
  icon: string;
  open?: boolean;
  closed?: boolean;
}

const noView = '- no associated view - [1:100]';
const unsaved = 'Несохраненный вид [1:100]';

const treeTop: TreeNode[] = [
  { depth: 0, label: 'Планы типового этажа (3 этаж_полы-отдел...', icon: 'dwg', open: true },
  { depth: 1, label: 'Сетки осей', icon: 'gridBlue', open: true },
  { depth: 2, label: 'Координатная сетка', icon: 'gridGray', open: true },
  { depth: 3, label: 'Уровни', icon: 'level', open: true },
];

const levels = ['7 (+20.250)', '6 (+16.950)', '5 (+13.650)', '4 (+10.350)', '3 (+7.050)', '2 (+3.750)', '1 (0.000)'];

const treeRest: TreeNode[] = [
  { depth: 3, label: 'Оси горизонтальные', icon: 'axesH', closed: true },
  { depth: 3, label: 'Оси вертикальные', icon: 'axesV', closed: true },
  { depth: 1, label: 'Сохраненные виды', icon: 'views', open: true },
  { depth: 2, label: 'Исходный вид', icon: 'cubeWire' },
  { depth: 2, label: '3D виды', icon: 'cubes', open: true },
  { depth: 3, label: '3D', icon: 'cube' },
  { depth: 2, label: 'Планы поэтажные', icon: 'plan' },
  { depth: 2, label: 'Разрезы', icon: 'section' },
  { depth: 2, label: 'Фасады', icon: 'facade' },
  { depth: 2, label: 'Несохраненный вид', icon: 'cube' },
  { depth: 1, label: 'Таблицы', icon: 'tableBlue', open: true },
  { depth: 2, label: 'Таблицы *.dwg', icon: 'tableRed' },
  { depth: 2, label: 'Таблицы nanoCAD', icon: 'tableBlue', open: true },
  { depth: 3, label: 'Спецификация проемов и элеме...', icon: 'table' },
  { depth: 3, label: 'Экспликация помещений (Model)', icon: 'table' },
  { depth: 3, label: 'Экспликация перемычек (Model)', icon: 'table' },
  { depth: 3, label: 'Ведомость объемов стен и перег...', icon: 'table' },
  { depth: 3, label: '{\\rtf1\\ansi\\deff0{\\fonttbl{\\f0\\fnil\\f...', icon: 'table' },
  { depth: 3, label: 'Экспликация полов (Model)', icon: 'table' },
  { depth: 3, label: 'Ответственные за разработку до...', icon: 'table' },
  { depth: 1, label: 'Листы', icon: 'sheetBlue', open: true },
  { depth: 2, label: 'Титульный лист', icon: 'sheet', open: true },
  { depth: 3, label: 'Ответственные за разработку до...', icon: 'table' },
  { depth: 2, label: 'Кладочный', icon: 'sheet', open: true },
  { depth: 3, label: unsaved, icon: 'viewport' },
  { depth: 3, label: noView, icon: 'viewport' },
  { depth: 3, label: noView, icon: 'viewport' },
  { depth: 3, label: noView, icon: 'viewport' },
  { depth: 2, label: 'Маркировочный', icon: 'sheet', open: true },
  { depth: 3, label: unsaved, icon: 'viewport' },
  { depth: 3, label: noView, icon: 'viewport' },
  { depth: 3, label: noView, icon: 'viewport' },
  { depth: 3, label: noView, icon: 'viewport' },
  { depth: 3, label: noView, icon: 'viewport' },
  { depth: 2, label: 'А2', icon: 'sheet' },
  { depth: 2, label: 'А3', icon: 'sheet' },
  { depth: 2, label: 'А4', icon: 'sheet' },
  { depth: 2, label: 'Лист6', icon: 'sheet' },
  { depth: 2, label: 'А1', icon: 'sheet', open: true },
  { depth: 3, label: unsaved, icon: 'viewport' },
  { depth: 0, label: 'Информация', icon: 'info', open: true },
  { depth: 1, label: 'Замечания', icon: 'note' },
];

const cubePath = 'M1.500 5l4-3.500h9v8l-4 4h-9zM1.500 5h9v8.500M10.500 5l4-3.500';

const treeIcons: Record<string, ReactNode> = {
  dwg: <Icon><rect x=".5" y=".5" width="15" height="15" fill="#fff" stroke="#4ab4e6" /><text x="8" y="6" textAnchor="middle" fontSize="6" fontWeight="bold" fontFamily="Liberation Sans, sans-serif" fill="#333">DWG</text><path d="M8 8h6v6H8z" fill="#0d96d8" /><path d="M11 9v4" stroke="#fff" /></Icon>,
  gridBlue: <Icon><path d="M4 1v14M8 1v14M12 1v14M1 4h14M1 8h14M1 12h14" stroke="#5dbbe4" strokeWidth="1.500" /></Icon>,
  gridGray: <Icon><path d="M4 1v14M8 1v14M12 1v14M1 4h14M1 8h14M1 12h14" stroke="#999" strokeWidth="1.500" /></Icon>,
  level: <Icon><path d="M4 1v14M1 13.500h14" stroke="#5dbbe4" strokeWidth="1.500" /><path d="M15 4H9L6 8h8M9 5L6 8" stroke="#888" /></Icon>,
  axesH: <Icon><path d="M1 3.500h14M1 8.500h14M1 13.500h14" stroke="#5dbbe4" /></Icon>,
  axesV: <Icon><path d="M3.500 1v14M8.500 1v14M13.500 1v14" stroke="#5dbbe4" /></Icon>,
  views: <Icon><path d="M1 4l6-3 8 3v8l-7 3-7-2z" fill="#d8e6ee" stroke="#567" /><path d="M1 4l6-3v11l-6 1z" fill="#0d84c4" /><path d="M9 7l4-1v5l-4 1z" fill="#0d84c4" /></Icon>,
  cubeWire: <Icon><path d={cubePath} stroke="#777" /><path d="M5.500 1.500v8h9M5.500 9.500l-4 4" stroke="#777" /></Icon>,
  cubes: <Icon><path d="M7 1h8v9l-3 2M1 8l2-2h6v6l-2 3H1z" stroke="#5dbbe4" strokeWidth="1.300" /><path d="M1 8h6v7M7 8l2-2" stroke="#3aa0d0" /></Icon>,
  cube: <Icon><path d={cubePath} stroke="#888" fill="#fff" /></Icon>,
  plan: <Icon><path d="M1.500 2.500h5v3h3v-3M9.500 5.500h5v8h-13v-11" stroke="#5dbbe4" strokeWidth="1.300" /></Icon>,
  section: <Icon><path d="M1 6l7-4 7 4M3.500 6v8h9V6M8 2v12M10.500 8v6" stroke="#5dbbe4" strokeWidth="1.300" /></Icon>,
  facade: <Icon><path d="M1 6l7-4 7 4M3.500 6v8h9V6M6 8h4v3H6z" stroke="#5dbbe4" strokeWidth="1.300" /></Icon>,
  tableBlue: <Icon><path d="M1.500 2.500h13v12h-13zM1 7h14M1 11h14M6 4v10M10 4v10" stroke="#777" /><path d="M1 2h14v3H1z" fill="#0d84c4" /></Icon>,
  tableRed: <Icon><path d="M1.500 2.500h13v12h-13zM1 7h14M1 11h14M6 4v10M10 4v10" stroke="#999" /><path d="M1 2h14v3H1z" fill="#e04040" /><path d="M5 13l3-7 3 7M6 11h4" stroke="#d02020" strokeWidth="1.500" /></Icon>,
  table: <Icon><path d="M1.500 1.500h13v13h-13zM1 6h14M1 10h14M6 4v10M10 4v10M1 3h14" stroke="#999" /></Icon>,
  sheetBlue: <Icon><path d="M1.500 3.500h13v9h-13z" stroke="#5dbbe4" fill="#fff" /><path d="M10 12h4" stroke="#5dbbe4" strokeWidth="2" /></Icon>,
  sheet: <Icon><path d="M1.500 3.500h13v9h-13z" stroke="#999" fill="#fff" /><path d="M10 12h4" stroke="#888" strokeWidth="2" /></Icon>,
  viewport: <Icon><path d="M1.500 3.500h13v9h-13z" stroke="#999" fill="#fff" /><path d="M4 7l2-2h3v4l-2 2H4z" fill="#bfe3f5" stroke="#0d96d8" /><path d="M11 12h3" stroke="#888" strokeWidth="2" /></Icon>,
  info: <Icon><path d="M7 6h3.500v8H7z" fill="#0d96d8" /><circle cx="8.500" cy="3.500" r="1.500" fill="#0d96d8" /></Icon>,
  note: <Icon><circle cx="8" cy="9" r="7" fill="#fff" stroke="#777" /><path d="M8 5v8" stroke="#0d96d8" strokeWidth="2" /></Icon>,
};

const indents = ['pl-[5px]', 'pl-[25px]', 'pl-[45px]', 'pl-[65px]'];

const TreeRow: React.FC<{ node: TreeNode }> = ({ node }) => (
  <li className={`flex h-[18px] items-center whitespace-nowrap leading-[18px] ${indents[node.depth]}`}>
    <span className="mr-1.5 w-2.5 shrink-0">
      {node.open && <ChevronDown size={9} />}
      {node.closed && <ChevronRight size={9} />}
    </span>
    {treeIcons[node.icon]}
    <span className="pl-[7px]">{node.label}</span>
  </li>
);

const RightPanel: React.FC = () => (
  <aside className="flex w-[317px] shrink-0 flex-col">
    <PanelTitle>Диспетчер проекта</PanelTitle>
    <div className="flex h-8 shrink-0 items-center gap-1 bg-[#ebebeb] px-1">
      <button type="button" aria-label="Структура" className="border border-[#0d8dcf] bg-[#cfe6f2] px-0.5">
        <Icon size={18}><path d="M1 3l5-2 4 2v9l-5 1-4-1z" fill="#0d96d8" stroke="#0a6aa0" /><path d="M2 5h5M2 8h5M2 11h5" stroke="#8fd0f0" /><path d="M9 11.500h7M9 14.500h7" stroke="#888" /></Icon>
      </button>
      <button type="button" aria-label="Сведения" className="px-0.5">
        <Icon size={18}><path d="M2 5h4v8H2z" fill="#0d96d8" /><circle cx="4" cy="2" r="1.500" fill="#0d96d8" /><path d="M8 11.500h7M8 14.500h7" stroke="#888" /></Icon>
      </button>
      <span className="h-5 border-l-2 border-[#999]" />
      <button type="button" aria-label="Открыть проект" className="bg-[#f2f2f2] px-0.5">
        <Icon><path d="M2 13V4h5l1-1h6v2" fill="#0a78b4" /><path d="M1 14l3-8h12l-3 8z" fill="#2fa4dc" /></Icon>
      </button>
      <span className="flex-1 whitespace-nowrap">CADLib-проект: *нет подключения</span>
      <button type="button" aria-label="База" className="bg-[#f2f2f2] px-0.5">
        <Icon><path d="M3 1h10v7H3z" fill="#7cc8ee" stroke="#0d84c4" /><path d="M3 4h10M1 11h14v4H1zM8 8v6M5 11l3-3 3 3" stroke="#0d84c4" /></Icon>
      </button>
      <button type="button" aria-label="Настройки проекта" className="bg-[#f2f2f2] px-0.5 text-[#0d8dcf]"><Settings size={17} strokeWidth={3} /></button>
    </div>
    <div className="flex min-h-0 flex-1 overflow-hidden border border-t-2 border-[#777] bg-[#f5f5f5]">
      <ul className="min-w-0 flex-1 overflow-hidden pt-0.5">
        {treeTop.map((node) => <TreeRow key={node.label} node={node} />)}
        {levels.map((level, i) => (
          <li key={level} className="pl-[102px]">
            <label className="relative flex h-[15px] items-center">
              <input type="checkbox" defaultChecked={i === 4} className="peer h-3.5 w-3.5 appearance-none border border-[#777] bg-white" />
              <Check size={13} strokeWidth={3} className="absolute left-0 hidden peer-checked:block" />
              <span className="pl-1.5">{level}</span>
            </label>
          </li>
        ))}
        {treeRest.map((node, i) => <TreeRow key={i} node={node} />)}
      </ul>
      <div className="w-4 bg-[#ececec]">
        <div className="h-[94%] rounded-b border border-t-0 border-[#777] bg-[#f0f0f0]" />
      </div>
    </div>
  </aside>
);

/* ---------- Command line and status bar ---------- */

const CommandLine: React.FC = () => (
  <section className="mt-1.5 flex h-[69px] shrink-0 bg-[#eaeaea] font-['DejaVu_Sans_Mono',monospace] text-xs">
    <div className="flex w-[19px] flex-col items-center gap-2 overflow-hidden bg-[#d1d1d1] pt-1 text-[#555]">
      <button type="button" aria-label="Закрыть строку"><X size={11} /></button>
      <Pin size={9} className="shrink-0 rotate-90" />
      <span className="rotate-180 overflow-hidden whitespace-nowrap font-['Open_Sans',sans-serif] text-[11px] leading-3 [writing-mode:vertical-rl]">Коман</span>
    </div>
    <div className="flex flex-1 flex-col">
      <div className="flex flex-1 flex-col justify-end overflow-hidden whitespace-pre pb-0.5 pl-0.5 leading-[14px]">
        {'Укажите противоположный угол:\n*Отмена*\nКоманда: DEdit\ndedit - редактирование'}
      </div>
      <label className="flex h-[17px] items-center border-l border-t border-[#777] pl-0.5">
        Команда:
        <input className="min-w-0 flex-1 bg-transparent pl-2 outline-none" />
      </label>
    </div>
  </section>
);

const Toggle: React.FC<{ on?: boolean; label: string; width: string }> = ({ on, label, width }) => (
  <button type="button" className={`h-5 whitespace-nowrap ${width} ${on ? 'border-2 border-[#0d8dcf] bg-white' : 'border-2 border-[#ebebeb] bg-[#e6e6e6]'}`}>{label}</button>
);

const navIcons: ReactNode[] = [
  <Hand size={16} color="#666" strokeWidth={1.5} />,
  <Icon size={18}><circle cx="7" cy="6.500" r="5.500" fill="#c5e4f5" stroke="#6a8ba0" /><path d="M11 11l4 4" stroke="#666" strokeWidth="2" /></Icon>,
  <span className="bg-[#5fc0ee] p-px"><Search size={15} color="#246" /></span>,
  <Icon size={18}><path d="M1 13V1h12v4" stroke="#0d96d8" strokeWidth="1.500" /><path d="M1 13h5" stroke="#555" /><circle cx="10" cy="10" r="3" fill="#d8eef9" stroke="#555" /><path d="M12 12l3 3" stroke="#555" strokeWidth="1.500" /></Icon>,
  <Icon size={18}><path d="M8 1v14M6 3l2-2 2 2" stroke="#777" /><ellipse cx="8" cy="8.500" rx="7" ry="3.500" stroke="#777" /></Icon>,
  <RefreshCw size={14} color="#2c9e3c" strokeWidth={2.5} />,
  <Icon size={18}><path d="M1 10V2h10v4" stroke="#777" /><path d="M6 9h9v6H6z" fill="#999" stroke="#555" /><path d="M8 9V6h5v3" stroke="#666" strokeWidth="1.500" /></Icon>,
];

const StatusBar: React.FC = () => (
  <footer className="flex h-6 shrink-0 items-center">
    <output className="w-[108px] pl-1">79449.6,5173.4,0.0</output>
    <div className="flex gap-px border-l border-[#888] pl-0.5">
      <Toggle label="ШАГ" width="w-[40px]" />
      <Toggle label="СЕТКА" width="w-[48px]" />
      <div className="flex">
        <Toggle on label="оПРИВЯЗКА" width="w-[79px]" />
        <Toggle on label="3D оПРИВЯЗКА" width="w-[96px]" />
        <Toggle on label="ОТС-ОБЪЕКТ" width="w-[85px]" />
        <Toggle on label="ОТС-ПОЛЯР" width="w-[81px]" />
      </div>
      <Toggle label="ОРТО" width="w-[46px]" />
      <Toggle on label="ДИН-ВВОД" width="w-[75px]" />
      <Toggle label="ИЗО" width="w-[41px]" />
    </div>
    <div className="ml-0.5 flex border-x border-[#888] pr-0.5">
      <Toggle on label="ВЕС" width="w-[37px]" />
      <Toggle on label="ШТРИХОВКА" width="w-[84px]" />
    </div>
    <div className="ml-auto flex h-5 items-stretch gap-0.5 [&>*]:bg-[#e9e9e9]">
      <button type="button" className="w-12">МОДЕЛЬ</button>
      <button type="button" aria-label="Блокировка" className="flex w-5 items-center justify-center">
        <Icon><path d="M1 8h8v6H1zM7 5h7v5H9" fill="#aaa" stroke="#555" /><path d="M3 8V5h4v3M9 5V2h4v3" stroke="#666" /></Icon>
      </button>
      <button type="button" aria-label="Выбор листа" className="flex w-[110px] items-center justify-between">
        <Icon><path d="M1 1h12v12H1z" fill="#ddd" stroke="#777" /><path d="M7 11h8l-4 4z" fill="#333" /></Icon>
        <Caret color="#333" />
      </button>
      <button type="button" aria-label="Выделение" className="flex w-5 items-center justify-center">
        <Icon><rect x=".5" y=".5" width="15" height="14" stroke="#0d96d8" strokeDasharray="2 1" /><circle cx="6" cy="6" r="3" stroke="#246" /><path d="M9 6v9l2-2 3 1z" fill="#fff" stroke="#333" /></Icon>
      </button>
      <button type="button" aria-label="Подсветка" className="flex w-5 items-center justify-center">
        <Icon><circle cx="8" cy="6" r="5" fill="#bbb" stroke="#888" /><path d="M6 10h4v5H6z" fill="#777" /></Icon>
      </button>
      <div className="flex">
        <button type="button" aria-label="Запрет выбора" className="flex w-[30px] items-center justify-center border-2 border-[#0d8dcf] bg-white"><Icon size={18}><path d="M6 3v9l2-2 3 1z" stroke="#444" /><circle cx="8" cy="8" r="7" stroke="#d8232a" strokeWidth="1.500" /><path d="M3 13L13 3" stroke="#d8232a" strokeWidth="1.500" /></Icon></button>
        <button type="button" aria-label="Быстрые свойства" className="-ml-0.5 flex w-[30px] items-center justify-center border-2 border-[#0d8dcf] bg-white"><Icon><path d="M2 0v8l2-2 4 1z" stroke="#444" /><rect x="7" y="8" width="8" height="7" fill="#fff" stroke="#444" /><path d="M7 9h8" stroke="#0d78c0" strokeWidth="2" /><path d="M9 12h4" stroke="#444" /></Icon></button>
        <button type="button" aria-label="Динамическая ПСК" className="-ml-0.5 flex w-[30px] items-center justify-center border-2 border-[#0d8dcf] bg-white"><Icon><path d="M2 1v13h13M0 3l2-2 2 2M13 12l2 2-2 2M2 14l4-4" stroke="#333" /><path d="M11 1L8 6h3l-2 5 5-6h-3l2-4z" fill="#222" /></Icon></button>
      </div>
      <button type="button" className="w-[86px]">m1:100</button>
      {navIcons.map((icon, i) => (
        <button key={i} type="button" aria-label={`Навигация ${i + 1}`} className={`flex items-center justify-center ${i > 4 ? 'w-5' : 'w-[27px]'}`}>{icon}</button>
      ))}
      <button type="button" className="w-[105px] whitespace-nowrap">Неизвестный стиль</button>
      <button type="button" className="flex w-[84px] items-center justify-center gap-1 whitespace-nowrap"><span className="h-[11px] w-[11px] shrink-0 rounded-full border border-[#1d6a25] bg-[#4cab52]" />Показ узлов</button>
      <button type="button" className="ml-1 w-7">LOD</button>
      <button type="button" className="flex w-[58px] items-center gap-0.5"><Icon size={15}><path d="M1 1h14v6c-4-1-7 1-7 5l-3 3H1z" fill="#fff" stroke="#444" strokeWidth="1.500" /></Icon>Контур</button>
      <button type="button" aria-label="Новое окно" className="flex w-5 items-center justify-center"><Icon><path d="M1 6h10v9H1z" fill="#fff" stroke="#555" /><path d="M1 5h10v3H1z" fill="#0d96d8" /><path d="M4 2h5M14 8v6M10 6l5-5M11 1h4v4" stroke="#1f60b8" /></Icon></button>
      <button type="button" aria-label="Во весь экран" className="flex w-7 items-center justify-center"><Icon><path d="M1 4V1h3M12 1h3v3M15 12v3h-3M4 15H1v-3" stroke="#555" /><rect x="3" y="4" width="10" height="8" fill="#0d84c4" /></Icon></button>
    </div>
    <svg width="18" height="18" viewBox="0 0 18 18" fill="#888" className="self-end" aria-hidden="true"><path d="M14 6h2v2h-2zM14 10h2v2h-2zM14 14h2v2h-2zM10 10h2v2h-2zM10 14h2v2h-2zM6 14h2v2H6z" /></svg>
  </footer>
);

/* ---------- Table editor dialog ---------- */

const toolColors = { blue: '#1f62ad', gray: '#8f8f8f' };

const Arrow: React.FC<{ turn: number; color: string }> = ({ turn, color }) => (
  <Icon><path d="M5 2h6v5h4l-7 7-7-7h4z" fill={color} transform={`rotate(${turn} 8 8)`} /></Icon>
);

const SortIcon: React.FC<{ top: string; bottom: string }> = ({ top, bottom }) => (
  <Icon><text x="1" y="7" fontSize="8" fontWeight="bold" fontFamily="Liberation Serif, serif" fill="#1f4fa0">{top}</text><text x="1" y="15" fontSize="8" fontWeight="bold" fontFamily="Liberation Serif, serif" fill="#c02030">{bottom}</text><path d="M12 1v13M9.500 11l2.500 4 2.500-4" stroke="#000" strokeWidth="1.200" /></Icon>
);

const CheckTool: React.FC = () => (
  <Icon size={14}><rect x="1.500" y="1.500" width="13" height="13" fill="#fff" stroke="#357" /><path d="M4 8l3 3 5-7" stroke="#333" strokeWidth="1.500" /></Icon>
);

const sep = '|';
const drop = 'v';

const toolbarOne: ReactNode[] = [
  <Icon><path d="M1 13V3h5l1 2h6v2" fill="#f3cc4e" stroke="#b08a1a" /><path d="M1 14l2-7h12l-2 7z" fill="#fbe08a" stroke="#b08a1a" /></Icon>,
  drop,
  <Icon><path d="M1 1h14v14H1z" fill="#444" /><path d="M4 1h8v6H4z" fill="#e8f0d8" /><path d="M4 10h8v5H4z" fill="#98b040" /></Icon>,
  drop, sep,
  <Icon><path d="M5 1h10v10H5z" fill="#ddd" stroke="#777" /><path d="M1 5h9v10H1z" fill="#bbb" stroke="#666" /><path d="M3 8l5 5M8 8l-5 5" stroke="#555" strokeWidth="1.500" /></Icon>,
  <Icon><path d="M1 1h10v10H1z" fill="#cde0f4" stroke="#1f62ad" /><path d="M6 5h9v10H6z" fill="#d8f0d8" stroke="#2a8a3a" /><path d="M8 8l5 5M13 8l-5 5" stroke="#2a8a3a" strokeWidth="1.500" /><path d="M3 2l5 4" stroke="#d02040" strokeWidth="2" /></Icon>,
  <Icon><rect x="1" y="6" width="7" height="4" rx="2" stroke="#777" strokeWidth="1.500" /><rect x="8" y="6" width="7" height="4" rx="2" stroke="#777" strokeWidth="1.500" /></Icon>,
  sep,
  <Icon><path d="M1 9c3-5 11-5 14 0-3 4-11 4-14 0z" fill="#fff" stroke="#222" strokeWidth="1.500" /><circle cx="8" cy="9" r="3" fill="#1f4f7a" /></Icon>,
  sep,
  <Icon><path d="M1 4l9 4M1 9l9-3" stroke="#666" strokeWidth="1.500" /><circle cx="12" cy="5" r="2" stroke="#666" /><circle cx="12" cy="11" r="2" stroke="#666" /></Icon>,
  <Icon><path d="M1 1h9v10H1z" fill="#dcebf7" stroke="#2a78b8" /><path d="M5 4h7l3 3v8H5z" fill="#c5def2" stroke="#2a78b8" /></Icon>,
  <Icon><path d="M1 2h11v11H1z" fill="#999" stroke="#666" /><path d="M4 1h5v3H4z" fill="#ccc" stroke="#666" /><path d="M7 6h8v9H7z" fill="#e8e8e8" stroke="#777" /></Icon>,
  sep,
  <Icon><path d="M3 9V4M3 9h5M3 9c3-5 10-4 10 3" stroke="#aaa" strokeWidth="1.800" /></Icon>,
  <Icon><path d="M13 9V4M13 9H8M13 9C10 4 3 5 3 12" stroke="#aaa" strokeWidth="1.800" /></Icon>,
  sep,
  <Arrow turn={0} color={toolColors.blue} />,
  <Arrow turn={180} color={toolColors.blue} />,
  <Arrow turn={90} color={toolColors.gray} />,
  <Arrow turn={270} color={toolColors.blue} />,
  sep,
  <Icon><path d="M1 1h14v14H1z" fill="#dce9f5" stroke="#1f62ad" /><path d="M1 2h14" stroke="#1f62ad" strokeWidth="3" /><path d="M3 13L13 5M3 5l10 9" stroke="#1f62ad" /><path d="M6 10l2-4 2 4 2-3" stroke="#d02030" /></Icon>,
  <Icon><path d="M1 1h14v14H1z" fill="#bbb" stroke="#777" /><path d="M1 3h14M3 7h6M3 11h4M9 9h5v3H9z" stroke="#666" strokeWidth="1.500" /></Icon>,
  <SortIcon top="А" bottom="Я" />,
  <SortIcon top="Я" bottom="А" />,
  <Icon><path d="M12 4V2H3l5 6-5 6h9v-2" stroke={toolColors.blue} strokeWidth="2" /><path d="M12 8h3" stroke="#c02030" strokeWidth="2" /></Icon>,
  sep,
  <Icon><path d="M1 3h14v11H1z" fill="#cfe2f4" stroke={toolColors.blue} strokeWidth="1.500" /><path d="M1 4h14M3 9h10M3 12h10" stroke={toolColors.blue} strokeWidth="2" /></Icon>,
  <Icon><path d="M8 3C6 1 3 1 1 2v11c2-1 5-1 7 1 2-2 5-2 7-1V2c-2-1-5-1-7 1zM8 3v11" fill="#f4f8fc" stroke={toolColors.blue} strokeWidth="1.300" /><path d="M3 5h3M3 8h3M10 5h3M10 8h3" stroke={toolColors.blue} /></Icon>,
  <Icon><path d="M3 4l4-3h7l-4 3v9l-3 2H3l3-2V4z" fill="#dce9f5" stroke={toolColors.blue} /></Icon>,
  <Icon><circle cx="8" cy="8" r="5" stroke={toolColors.blue} strokeWidth="1.800" /><path d="M3 15L13 1" stroke={toolColors.blue} strokeWidth="1.500" /></Icon>,
  sep,
  <Icon><rect x="3" y="1" width="11" height="14" fill="#4a8ac4" stroke="#246" /><path d="M5 3h7v2H5z" fill="#dff" /><path d="M5 8h2M8 8h2M11 8h2M5 11h2M8 11h2M11 11h2" stroke="#fff" strokeWidth="2" /></Icon>,
  <span className="flex h-[22px] w-[22px] items-center justify-center border border-[#90b8dc] bg-[#c0dcf3]"><CheckTool /></span>,
  sep,
  <Icon><path d="M3 8c0-6 8-7 10-2M13 8c0 6-8 7-10 2M13 1v5H9M3 15v-5h4" stroke="#c0302e" strokeWidth="2" /></Icon>,
  <span className="flex h-[22px] w-[22px] items-center justify-center border border-[#90b8dc] bg-[#c0dcf3]"><CheckTool /></span>,
  sep,
  <HelpIcon />,
];

const MergeIcon: React.FC<{ color: string; line: string }> = ({ color, line }) => (
  <Icon><rect x="1.500" y="1.500" width="13" height="13" fill="#fff" stroke={line} /><path d="M1 5h14M1 11h14M5 1v4M11 1v4M5 11v4M11 11v4" stroke={line} /><path d="M2 8h12M5 6L3 8l2 2M11 6l2 2-2 2" stroke={color} /></Icon>
);

const AlignIcon: React.FC<{ color: string }> = ({ color }) => (
  <Icon><rect x="1.500" y="2.500" width="13" height="11" fill="#f4f4f4" stroke={color} /><path d="M4 6h8M4 8.500h8M4 11h5" stroke={color === '#888' ? '#888' : '#d02030'} /></Icon>
);

const toolbarTwo: ReactNode[] = [
  <Icon><path d="M15 1L8 9" stroke="#357" strokeWidth="3" /><path d="M9 6c-4 0-5 3-8 4 2 2 6 3 9 0z" fill="#c02838" /><path d="M2 12h3v3H2z" fill="#e8402c" /><path d="M6 12h3v3H6z" fill="#f2c01e" /><path d="M10 12h3v3h-3z" fill="#5a3cc0" /></Icon>,
  sep,
  <MergeIcon color="#888" line="#999" />,
  <MergeIcon color="#ccc" line="#999" />,
  <MergeIcon color="#d02030" line="#3a9a5a" />,
  <Icon><rect x="1.500" y="1.500" width="13" height="13" fill="#fff" stroke="#d02030" /><path d="M1 5h14M1 11h14M6 1v14" stroke="#3a9a5a" /><path d="M5 13l8-11 2 2-8 10z" fill="#f2c01e" stroke="#8a5a10" /></Icon>,
  sep,
  <Icon><rect x="1.500" y="1.500" width="13" height="13" fill="#eef5fb" stroke="#2a78b8" /><path d="M8 1v14M1 8h14" stroke="#2a78b8" strokeDasharray="1 1" /></Icon>,
  drop,
];

const CellIcon: React.FC = () => (
  <Icon size={14}><path d="M1.500 1.500h13v13h-13zM8 1v14M1 8h14" fill="#fff" stroke="#2a62a8" strokeWidth="1.300" /></Icon>
);

const Toolbar: React.FC<{ items: ReactNode[] }> = ({ items }) => (
  <>
    {items.map((item, i) => {
      if (item === sep) return <span key={i} className="h-[19px] w-px shrink-0 bg-[#999]" />;
      if (item === drop) return <span key={i} className="shrink-0"><Caret color="#222" /></span>;
      return <button key={i} type="button" aria-label={`Инструмент ${i + 1}`} className="flex shrink-0 items-center">{item}</button>;
    })}
  </>
);

const rulerX = Array.from({ length: 176 }, (_, i) => i);

const TopRuler: React.FC = () => (
  <svg width="759" height="21" viewBox="513 272 759 21" className="block font-['Open_Sans',sans-serif]" aria-hidden="true">
    {rulerX.map((u) => (
      <path key={u} d={`M${Math.round(605 + u * 3.777) + 0.5} 293v-${u % 25 === 0 ? 6 : u % 5 === 0 ? 5 : 2}`} stroke="#999" />
    ))}
    {[0, 25, 50, 75, 100, 125, 150, 175].map((u) => (
      <text key={u} x={(u === 175 ? 603 : 605) + u * 3.777} y="285" textAnchor="middle" fontSize="10" fill="#222">{u}</text>
    ))}
  </svg>
);

const sideMarks: [string, number, number][] = [['0', 334, 86], ['25', 628, 340]];

const SideRuler: React.FC = () => (
  <svg width="33" height="672" viewBox="514 293 33 672" className="block shrink-0 font-['Open_Sans',sans-serif]" aria-hidden="true">
    {sideMarks.map(([, start, span]) =>
      Array.from({ length: Math.floor(span / 3.777) }, (_, i) => (
        <path key={`${start}-${i}`} d={`M547 ${Math.round(start + i * 3.777) + 0.5}h-${i % 5 === 0 ? 5 : 2}`} stroke="#999" />
      ))
    )}
    {[['0', 338], ['25', 632], ['50', 727], ['75', 822], ['100', 916]].map(([t, y]) => (
      <text key={t} x={t === '100' ? 532 : 535} y={y} textAnchor="middle" fontSize="10" fill="#222">{t}</text>
    ))}
  </svg>
);

const columns = [
  { name: 'A', width: 'w-[56px]' },
  { name: 'B', width: 'w-[189px]' },
  { name: 'C', width: 'w-[189px]' },
  { name: 'D', width: 'w-[57px]' },
  { name: 'E', width: 'w-[57px]' },
  { name: 'F', width: 'w-[94px]' },
];

const report = [
  { n: '7', code: 'БТ-009', name: 'Блоки пенобетонные 600х200', text: 'Легкие строительные блоки,\nизготовленные из пенобетона,\nобладают хорошей теплоизоляцией\nи применяются при возведении\nстен и перегородок', volume: '56.43', area: '36.19', height: 'h-[94px]' },
  { n: '122', code: 'БТ-001', name: 'Бетон конструкционный', text: 'Строительный материал,\nспособный обеспечить прочность и\nупругость, достаточные для\nнесущих и ограждающих\nэлементов', volume: '102.67', area: '59.4', height: 'h-[76px]' },
  { n: '222', code: 'БТ-004', name: 'Блоки пенобетонные', text: 'Легкие строительные блоки,\nизготовленные из пенобетона,\nобладают хорошей теплоизоляцией\nи применяются при возведении\nстен и перегородок', volume: '667.95', area: '69.89', height: 'h-[94px]' },
  { n: '334', code: 'БПГ-001', name: 'Блоки пазогребневые 667 х 500 х\n80', text: '', volume: '39.86', area: '12.73', height: 'h-[38px]' },
  { n: '', code: '', name: '', text: 'Жесткий тепло- и\nзвукоизоляционный материал на\nоснове минеральных волокон,\nиспользуется для улучшения\nтеплоизоляции стен,\nпотолков и полов', volume: '', area: '', height: 'h-[116px]' },
];

const cell = 'border-b border-r border-[#6f97b8] p-0';
const rowHead = 'border-b border-r border-l border-[#8a9aa8] p-0 font-normal';

const SectionRow: React.FC<{ title: string; height: string; dark?: boolean; tools?: boolean }> = ({ title, height, dark, tools }) => (
  <tr className={height}>
    <th className={`${rowHead} bg-[#f0f0f0]`} />
    <td />
    <td colSpan={6} className={`border-b border-[#6f97b8] p-0 text-left font-['Liberation_Mono',monospace] text-[13px] leading-4 ${dark ? 'text-black' : 'text-[#1c5fa8]'}`}>
      <div className="flex items-center justify-between pl-0.5 pr-1.5">
        {title}
        {tools && (
          <span className="flex gap-2.5">
            <Icon size={14}><rect x="1.500" y="1.500" width="13" height="13" fill="#fff" stroke="#357" /><path d="M4 8l3 3 5-7" stroke="#333" strokeWidth="1.500" /></Icon>
            {smallRibbon[2]}
            <Icon><path d="M5 1.500h6M5 4.500h6M5 11.500h6M5 14.500h6M1 8c3 0 4-1 7-1s4 1 7 1" stroke={toolColors.blue} /></Icon>
          </span>
        )}
      </div>
    </td>
  </tr>
);

const EditorGrid: React.FC = () => (
  <table className="w-[702px] table-fixed border-separate border-spacing-0 text-center font-['Liberation_Sans',sans-serif] text-[11px] leading-3 text-[#13263a]">
    <colgroup>
      <col className="w-[26px]" />
      <col className="w-[34px]" />
      {columns.map((c) => <col key={c.name} className={c.width} />)}
    </colgroup>
    <thead>
      <tr className="h-[17px]">
        <th className={`${rowHead} bg-[#f0f0f0]`} />
        <th className="border-b border-r border-[#8a9aa8] bg-[#f0f0f0] p-0" />
        {columns.map((c, i) => (
          <th key={c.name} className={`border-b border-r border-[#8a9aa8] p-0 font-normal ${i === 0 ? 'bg-linear-to-b from-[#4f96d2] to-[#1568b0] text-[#b9d8f0]' : 'bg-[#b4d4ee]'}`}>
            <div className="flex items-center pr-2">
              <span className="flex-1 pl-2">{c.name}</span>
              <svg width="12" height="7" viewBox="0 0 12 7" className="mt-1" aria-hidden="true"><path d="M0 0h12L6 7z" fill="#0a5aa8" /></svg>
            </div>
          </th>
        ))}
      </tr>
    </thead>
    <tbody>
      <SectionRow title="Верхний колонтитул первой страницы" height="h-6" />
      <tr className="h-[30px]">
        <th className={`${rowHead} bg-white`}>1</th>
        <td />
        <td colSpan={6} className="border-x border-b border-dashed border-[#aaa] bg-white p-0 text-[13px] text-black">Ведомость объемов стен и перегородок</td>
      </tr>
      <tr className="h-[56px]">
        <th className={`${rowHead} bg-linear-to-r from-[#4f96d2] to-[#1568b0] text-[#b9d8f0]`}>2</th>
        <td className="border-r border-[#6f97b8]" />
        {['Поз.', 'Наименование', 'Описание', 'Объем,\nкуб.м', 'Площадь,\nкв.м', 'Примечание'].map((h, i) => (
          <td key={h} className={`${cell} whitespace-pre ${i === 0 ? 'bg-[#1066b1]' : 'bg-[#b9d6ee]'}`}>{h}</td>
        ))}
      </tr>
      <SectionRow title="Верхний колонтитул" height="h-[30px]" />
      <tr className="h-[56px]">
        <th className={`${rowHead} bg-[#b4d4ee]`}>4</th>
        <td className="border-r border-[#6f97b8]" />
        <td colSpan={5} className={`${cell} bg-[#b9d6ee] text-[13px]`}>Ведомость объемов стен и перегородок</td>
        <td className={`${cell} bg-[#b9d6ee]`} />
      </tr>
      <SectionRow title="Шаблон отчёта" height="h-[30px]" tools />
      <tr className="h-[56px] text-[13px] leading-4">
        <th className={`${rowHead} bg-[#b4d4ee] text-[11px]`}>6</th>
        <td className="border-r border-[#6f97b8]" />
        <td className={`${cell} overflow-hidden whitespace-nowrap bg-[#80c5cb] text-left align-top`}>=Object.«</td>
        <td className={`${cell} bg-[#80c5cb]`}>=Object.«Имя материала»</td>
        <td className={`${cell} overflow-hidden whitespace-nowrap bg-[#80c5cb] text-left align-top`}>=Object.«Описание материала:</td>
        <td className={`${cell} overflow-hidden whitespace-nowrap bg-[#80c5cb] text-left align-top`}>=round(Σ</td>
        <td className={`${cell} overflow-hidden whitespace-nowrap bg-[#80c5cb] text-left align-top`}>=round(Σ</td>
        <td className={`${cell} bg-[#b9d6ee]`} />
      </tr>
      <SectionRow title="Отчёт" height="h-[30px]" dark />
      {report.map((row) => (
        <tr key={row.n} className={row.height}>
          <th className={`${rowHead} bg-[#b4d4ee]`}>{row.n}</th>
          <td className="border-r border-[#6f97b8]" />
          {[row.code, row.name, row.text].map((t, i) => (
            <td key={i} className={`${cell} whitespace-pre bg-[#a8bfe3]`}>{t}</td>
          ))}
          {[row.volume, row.area].map((t, i) => (
            <td key={i} className={`${cell} bg-[#a5c4dd] text-[#587a94]`}>{t}</td>
          ))}
          <td className={`${cell} bg-[#b9d6ee]`} />
        </tr>
      ))}
    </tbody>
  </table>
);

const rangeStyle = 'h-5 appearance-none bg-transparent [&::-webkit-slider-runnable-track]:h-1 [&::-webkit-slider-runnable-track]:border [&::-webkit-slider-runnable-track]:border-[#d6d6d6] [&::-webkit-slider-runnable-track]:bg-[#e7e7e7] [&::-webkit-slider-thumb]:-mt-1.5 [&::-webkit-slider-thumb]:h-[13px] [&::-webkit-slider-thumb]:w-1.5 [&::-webkit-slider-thumb]:appearance-none [&::-webkit-slider-thumb]:bg-[#0f66b0]';

const TableEditor: React.FC = () => (
  <div role="dialog" aria-label="Редактирование таблицы" className="absolute left-[493px] top-[140px] flex w-[780px] flex-col border border-[#999] bg-[#f0f0f0] shadow-[0_4px_14px_rgba(0,0,0,0.35)]">
    <div className="flex h-[29px] items-center bg-white text-[#999]">
      <span className="pl-2 pr-1"><Logo size={15} /></span>
      <h2 className="flex-1">Редактирование таблицы</h2>
      <button type="button" aria-label="Свернуть окно" className="flex w-[45px] justify-center text-[#ddd]"><Minus size={12} /></button>
      <button type="button" aria-label="Развернуть окно" className="flex w-[45px] justify-center"><Square size={12} strokeWidth={2} /></button>
      <button type="button" aria-label="Закрыть окно" className="flex w-[45px] justify-center"><X size={15} strokeWidth={1.5} /></button>
    </div>
    <nav className="flex h-[19px] items-center gap-[15px] bg-white pl-1.5 text-[#6d6d6d]">
      {['Файл', 'Правка', 'Вид', 'Столбцы', 'Строки', 'Ячейка', 'Разделы', 'Помощь'].map((m) => (
        <button key={m} type="button">{m}</button>
      ))}
    </nav>
    <div className="flex h-[23px] items-center justify-between pl-1 pr-1.5">
      <Toolbar items={toolbarOne} />
    </div>
    <div className="flex h-[22px] items-center gap-[7px] pl-1">
      <Toolbar items={toolbarTwo} />
      <div className="flex">
        <label className="relative flex w-[135px] items-center gap-1 border border-[#777] bg-white pl-1">
          <CellIcon />
          <span className="ml-0.5 h-[9px] w-[9px] bg-black" />
          <select aria-label="Цвет границы" className="h-[18px] flex-1 appearance-none bg-transparent"><option>По объекту</option></select>
          <ChevronDown size={12} className="absolute right-1" />
        </label>
        <label className="relative flex w-[162px] items-center gap-1 border border-[#777] bg-white pl-1">
          <CellIcon />
          <span className="h-px w-10 bg-black" />
          <select aria-label="Тип линии" className="h-[18px] flex-1 appearance-none bg-transparent"><option>По объекту</option></select>
          <ChevronDown size={12} className="absolute right-1" />
        </label>
      </div>
      <Toolbar items={[sep, <AlignIcon color="#888" />, drop, <AlignIcon color="#2a78b8" />, drop, <AlignIcon color="#2a78b8" />, drop, sep]} />
      <div className="relative w-40">
        <select aria-label="Стиль текста" className="h-[19px] w-full appearance-none border border-[#aaa] bg-white pl-1"><option>ГОСТ 2.304</option></select>
        <span className="pointer-events-none absolute right-1.5 top-2"><Caret color="#000" /></span>
      </div>
    </div>
    <div className="flex h-[25px] items-center">
      <output className="h-5 w-[76px] bg-white pr-0.5 text-right">A2:F491</output>
      <label htmlFor="formula" className="px-2 font-['Liberation_Serif',serif] text-sm font-bold italic leading-4">fx</label>
      <input id="formula" defaultValue="Поз." className="mr-px h-[19px] min-w-0 flex-1 border border-[#222] bg-white pl-0.5 outline-none" />
    </div>
    <div className="h-[5px] border-b border-[#777]" />
    <div className="mt-1 border-t-2 border-[#888]">
      <div className="flex border-l border-[#888]">
        <div className="min-w-0 flex-1">
          <TopRuler />
          <div className="flex h-[671px] overflow-hidden border-t border-[#999]">
            <SideRuler />
            <div className="relative min-w-0 flex-1 bg-[#f9f9f9]">
              <EditorGrid />
              <span className="absolute -bottom-1 left-[42px] top-[213px] w-3 rounded-tl-lg border-l border-t border-[#aaa] border-t-transparent" />
            </div>
          </div>
        </div>
        <div className="flex w-4 flex-col items-center justify-between bg-[#f0f0f0] text-[#555]">
          <ChevronUp size={14} strokeWidth={2.5} className="my-1" />
          <div className="mb-auto h-[469px] w-full bg-[#cdcdcd]" />
          <ChevronDown size={14} strokeWidth={2.5} className="mb-1" />
        </div>
      </div>
      <div className="flex h-[19px] items-center pr-5 text-[#555]">
        <ChevronLeft size={16} strokeWidth={2.5} />
        <div className="h-4 flex-1 bg-[#cdcdcd]" />
        <ChevronRight size={16} strokeWidth={2.5} className="ml-2" />
      </div>
      <div className="flex h-[23px] items-center border-t border-[#d0d0d0] pl-1 pr-1">
        <label htmlFor="opacity">Прозрачность</label>
        <input id="opacity" type="range" defaultValue={0} className={`ml-2 w-[110px] ${rangeStyle}`} />
        <label htmlFor="zoom" className="ml-auto">Масштаб</label>
        <input id="zoom" type="range" defaultValue={22} className={`ml-2 mr-2 w-[110px] ${rangeStyle}`} />
        <svg width="9" height="9" viewBox="0 0 9 9" fill="#bbb" className="self-end" aria-hidden="true"><path d="M7 1h2v2H7zM7 4h2v2H7zM7 7h2v2H7zM4 4h2v2H4zM4 7h2v2H4zM1 7h2v2H1z" /></svg>
      </div>
    </div>
  </div>
);

const App: React.FC = () => (
  <div className="h-screen overflow-hidden bg-white pb-[22px] pl-[18px] pr-[22px] pt-0.5 font-['Open_Sans','Noto_Sans',sans-serif] text-[11px] leading-4 text-black">
    <div className="relative flex h-full flex-col bg-[#d1d1d1] shadow-[0_3px_16px_rgba(0,0,0,0.45)]">
      <Header />
      <Ribbon />
      <div className="flex min-h-0 flex-1 gap-1 border-t border-[#8c8c8c]">
        <LeftPanel />
        <Drawing />
        <RightPanel />
      </div>
      <CommandLine />
      <StatusBar />
      <TableEditor />
    </div>
  </div>
);

export default App;
